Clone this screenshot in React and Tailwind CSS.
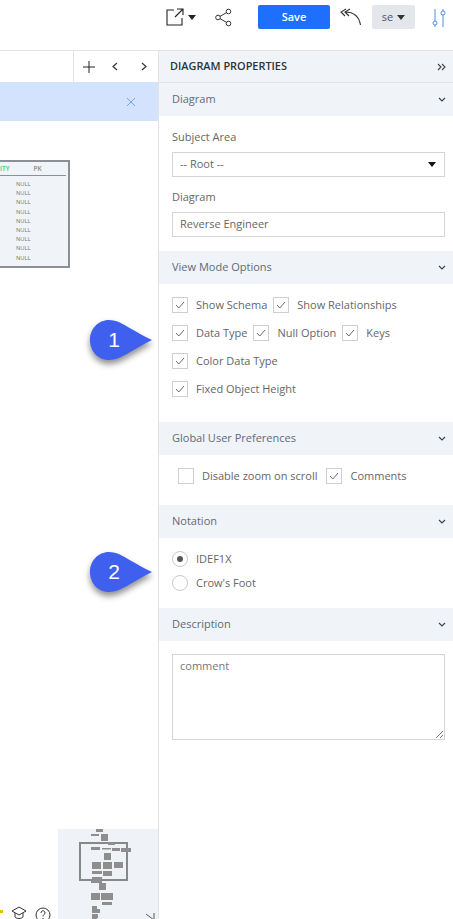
const FONT = "font-['Open_Sans',sans-serif]";

// 折りたたみセクションの見出し
const SectionHeader = ({ title }) => (
  <div className="h-[33px] bg-[#f0f3f7] flex items-center justify-between pl-[13px] pr-[7px] text-[11px] text-[#5f6b7a]">
    <span>{title}</span>
    <svg width="8" height="6" viewBox="0 0 8 6" fill="none" stroke="#3c4450" strokeWidth="1.2"><path d="M1 1l3 3 3-3" /></svg>
  </div>
);

const CheckBox = ({ label, checked = true }) => (
  <label className="flex items-center">
    <span className="w-[16px] h-[16px] border border-[#cfcfcf] bg-white flex items-center justify-center">
      {checked && (
        <svg width="10" height="8" viewBox="0 0 10 8" fill="none" stroke="#6a6a6a" strokeWidth="1"><path d="M1 4l2.800 3L9 1" /></svg>
      )}
    </span>
    <span className="ml-[8px] text-[11px] text-[#666]">{label}</span>
  </label>
);

const Radio = ({ label, checked }) => (
  <label className="flex items-center h-[24px]">
    <span className="w-[16px] h-[16px] rounded-full border border-[#c8c8c8] bg-white flex items-center justify-center">
      {checked && <span className="w-[6px] h-[6px] rounded-full bg-[#555]" />}
    </span>
    <span className="ml-[8px] text-[11px] text-[#666]">{label}</span>
  </label>
);

const Callout = ({ n, top }) => (
  <div className={`absolute left-[88px] w-[66px] h-[44px] ${top}`}>
    <svg width="66" height="50" viewBox="0 0 66 50" className="absolute left-0 top-0 drop-shadow-[0_4px_3px_rgba(0,0,0,0.45)]">
      <path d="M21 2C33 2 44 13 64 22 45 31 33 42 21 42 10 42 2 33 2 22S10 2 21 2Z" fill="#3f5fee" />
    </svg>
    <span className="absolute left-[18px] top-[7px] w-[16px] text-center text-[21px] leading-[30px] text-white font-['Liberation_Sans',sans-serif]">{n}</span>
  </div>
);

const miniRects = [
  [38, 0, 7, 3], [33, 5, 8, 2], [43, 5, 7, 7], [50, 13, 7, 3],
  [33, 18, 9, 3], [44, 19, 9, 1.500], [54, 19, 8, 3], [63, 19, 10, 4], [46, 24, 7, 7],
  [34, 33, 9, 7], [45, 33, 9, 7], [56, 33, 9, 6], [34, 42, 10, 3], [45, 42, 9, 5],
  [34, 48, 10, 6], [33, 52, 5, 2], [41, 54, 7, 7], [33, 64, 9, 7], [43, 64, 12, 7],
  [44, 73, 10, 3], [34, 77, 5, 3], [34, 80, 8, 4], [34, 85, 6, 4], [34, 89, 5, 1],
];

const TopBar = () => (
  <div className="h-[51px] flex items-start border-b border-[#e3e3e3] bg-white">
    <svg className="ml-[166px] mt-[8px]" width="18" height="18" viewBox="0 0 18 18" fill="none" stroke="#222" strokeWidth="1.100">
      <path d="M8 2H1v15h15V10M9 9l8-8M11 1h6v6" />
    </svg>
    <svg className="ml-[4px] mt-[15px]" width="8" height="5" viewBox="0 0 8 5"><path d="M0 0h8L4 5z" fill="#222" /></svg>
    <svg className="ml-[19px] mt-[8px]" width="17" height="19" viewBox="0 0 17 19" fill="none" stroke="#333" strokeWidth="1">
      <circle cx="13.500" cy="3.500" r="2.300" /><circle cx="3" cy="9.500" r="2.300" /><circle cx="13.500" cy="15.500" r="2.300" />
      <path d="M5 8.400l6.500-3.800M5 10.600l6.500 3.800" />
    </svg>
    <button className="ml-[26px] mt-[5px] w-[72px] h-[24px] bg-[#1f6fff] rounded-[2px] text-white text-[11px] font-semibold">Save</button>
    <svg className="ml-[10px] mt-[8px]" width="22" height="18" viewBox="0 0 22 18" fill="none" stroke="#333" strokeWidth="1.100">
      <path d="M6 1L1 4l4 4M10 1L5 4l4 4M5 4c8 0 14 4 15.500 13" />
    </svg>
    <div className="ml-[10px] mt-[5px] w-[43px] h-[24px] bg-[#e3e6ea] rounded-[2px] flex items-center justify-center text-[11px] text-[#555]">
      se
      <svg className="ml-[4px]" width="8" height="5" viewBox="0 0 8 5"><path d="M0 0h8L4 5z" fill="#333" /></svg>
    </div>
    <svg className="ml-[17px] mt-[8px]" width="15" height="20" viewBox="0 0 15 20" fill="none" strokeWidth="0.900">
      <path d="M3 1v12M3 17v2" stroke="#3b83de" /><circle cx="3" cy="15" r="2" stroke="#3b83de" />
      <path d="M11 1v2M11 7v12" stroke="#3b83de" /><circle cx="11" cy="5" r="2" stroke="#3b83de" />
    </svg>
  </div>
);

const Canvas = () => (
  <div className="relative w-[159px] shrink-0 h-[868px] border-r border-[#e3e3e3] flex flex-col">
    <div className="h-[31px] flex justify-end">
      <div className="w-[85px] border-l border-[#e3e3e3] flex items-center pl-[9px]">
        <svg width="12" height="12" viewBox="0 0 12 12" stroke="#222" strokeWidth="1"><path d="M6 0v12M0 6h12" /></svg>
        <svg className="ml-[17px]" width="6" height="9" viewBox="0 0 6 9" fill="none" stroke="#333" strokeWidth="1.200"><path d="M5 1L1 4.500l4 3.500" /></svg>
        <svg className="ml-[23px]" width="6" height="9" viewBox="0 0 6 9" fill="none" stroke="#333" strokeWidth="1.200"><path d="M1 1l4 3.500-4 3.500" /></svg>
      </div>
    </div>
    <div className="h-[39px] bg-[#d4e3fd] flex items-center justify-end pr-[22px]">
      <svg width="10" height="10" viewBox="0 0 10 10" stroke="#7aa5ee" strokeWidth="1"><path d="M1 1l8 8M9 1l-8 8" /></svg>
    </div>
    {/* 図のテーブル（キャンバス上の自由配置） */}
    <div className="absolute left-0 top-[109px] w-[70px] h-[108px] bg-[#f0f3f7] border-2 border-l-0 border-[#8a8f98]">
      <div className="h-[14px] mr-[2px] border-b border-[#8a8f98] flex items-center text-[6.500px] font-semibold">
        <span className="text-[#3fcf7f]">ITY</span>
        <span className="ml-[24px] text-[#888]">PK</span>
      </div>
      <div className="pl-[16px] pt-[4px] text-[5.800px] leading-[9.200px] text-[#777]">
        {Array.from({ length: 9 }).map((_, i) => <div key={i}>NULL</div>)}
      </div>
    </div>
    <div className="mt-auto flex items-end justify-between">
      <div className="flex items-end gap-[8px] h-[14px] overflow-hidden">
        <span className="w-[3px] h-[3px] bg-[#f5b800] mb-[6px]" />
        <svg width="16" height="13" viewBox="0 0 16 13" fill="none" stroke="#333" strokeWidth="1"><path d="M8 1L1 5l7 4 7-4zM4 7v4c2 2 6 2 8 0V7" /></svg>
        <svg width="16" height="14" viewBox="0 0 16 14" fill="none" stroke="#333" strokeWidth="1" className="mb-[-2px]"><circle cx="8" cy="8" r="7" /><path d="M6 6c0-3 4-3 4 0 0 1.500-2 1.500-2 3.500M8 11v1" /></svg>
      </div>
      <div className="relative w-[100px] h-[90px] bg-[#eff2f6] overflow-hidden">
        <svg width="100" height="90" viewBox="0 0 100 90" className="block">
          <rect x="22" y="14" width="47" height="37" fill="none" stroke="#888" strokeWidth="2" />
          {miniRects.map(([x, y, w, h], i) => <rect key={i} x={x} y={y} width={w} height={h} fill="#8e8e8e" />)}
          <path d="M88 85l8 6M96 84v6" stroke="#333" strokeWidth="0.800" fill="none" />
        </svg>
      </div>
    </div>
  </div>
);

const Panel = () => (
  <div className="flex-1 flex flex-col">
    <div className="h-[32px] bg-[#f0f3f7] border-b border-[#e0e3e7] flex items-center justify-between pl-[11px] pr-[7px]">
      <span className="text-[10.900px] font-semibold text-[#2e3440]">DIAGRAM PROPERTIES</span>
      <svg width="9" height="8" viewBox="0 0 9 8" fill="none" stroke="#444" strokeWidth="1.100"><path d="M1 1l3 3-3 3M5 1l3 3-3 3" /></svg>
    </div>
    <SectionHeader title="Diagram" />
    <div className="h-[135px] pl-[13px] pr-[8px] pt-[11px] text-[11px] text-[#666]">
      <div className="h-[20px] leading-[20px]">Subject Area</div>
      <div className="mt-[5px] h-[25px] border border-[#d5d5d5] flex items-center justify-between pl-[7px] pr-[8px]">
        -- Root --
        <svg width="8" height="5" viewBox="0 0 8 5"><path d="M0 0h8L4 5z" fill="#111" /></svg>
      </div>
      <div className="mt-[10px] h-[20px] leading-[20px]">Diagram</div>
      <div className="mt-[5px] h-[25px] border border-[#d5d5d5] flex items-center pl-[7px]">Reverse Engineer</div>
    </div>
    <SectionHeader title="View Mode Options" />
    <div className="h-[138px] pl-[13px] pt-[13px] flex flex-col gap-[12px]">
      <div className="flex h-[16px] gap-[6px]"><CheckBox label="Show Schema" /><CheckBox label="Show Relationships" /></div>
      <div className="flex h-[16px] gap-[6px]"><CheckBox label="Data Type" /><CheckBox label="Null Option" /><CheckBox label="Keys" /></div>
      <div className="flex h-[16px]"><CheckBox label="Color Data Type" /></div>
      <div className="flex h-[16px]"><CheckBox label="Fixed Object Height" /></div>
    </div>
    <SectionHeader title="Global User Preferences" />
    <div className="h-[50px] pl-[19px] pt-[13px]">
      <div className="flex h-[16px] gap-[9px]"><CheckBox label="Disable zoom on scroll" checked={false} /><CheckBox label="Comments" /></div>
    </div>
    <SectionHeader title="Notation" />
    <div className="h-[70px] pl-[13px] pt-[9px]">
      <Radio label="IDEF1X" checked />
      <Radio label="Crow's Foot" />
    </div>
    <SectionHeader title="Description" />
    <div className="pl-[13px] pr-[8px] pt-[13px]">
      <div className="relative h-[86px] border border-[#d5d5d5] pl-[7px] pt-[3px] text-[11px] text-[#777]">
        comment
        <svg className="absolute right-[1px] bottom-[1px]" width="8" height="8" viewBox="0 0 8 8" stroke="#555" strokeWidth="0.800"><path d="M1 8l7-7M5 8l3-3" /></svg>
      </div>
    </div>
  </div>
);

export default function App() {
  return (
    <div className={`relative w-[453px] h-[919px] overflow-hidden bg-white ${FONT}`}>
      <TopBar />
      <div className="flex">
        <Canvas />
        <Panel />
      </div>
      <Callout n="1" top="top-[318px]" />
      <Callout n="2" top="top-[550px]" />
    </div>
  );
}
